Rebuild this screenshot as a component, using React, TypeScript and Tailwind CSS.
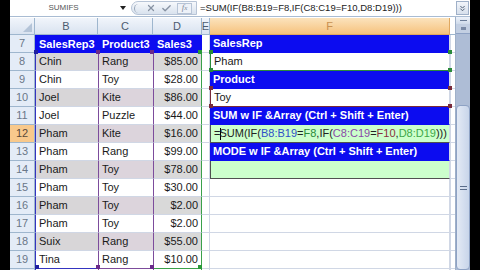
import { X, Check, ChevronsDown } from 'lucide-react'

type Row = { n: number; b: string; c: string; d: string }

const data: Row[] = [
  { n: 8, b: 'Chin', c: 'Rang', d: '$85.00' },
  { n: 9, b: 'Chin', c: 'Toy', d: '$28.00' },
  { n: 10, b: 'Joel', c: 'Kite', d: '$86.00' },
  { n: 11, b: 'Joel', c: 'Puzzle', d: '$44.00' },
  { n: 12, b: 'Pham', c: 'Kite', d: '$16.00' },
  { n: 13, b: 'Pham', c: 'Rang', d: '$99.00' },
  { n: 14, b: 'Pham', c: 'Toy', d: '$78.00' },
  { n: 15, b: 'Pham', c: 'Toy', d: '$30.00' },
  { n: 16, b: 'Pham', c: 'Toy', d: '$2.00' },
  { n: 17, b: 'Pham', c: 'Toy', d: '$2.00' },
  { n: 18, b: 'Suix', c: 'Rang', d: '$55.00' },
  { n: 19, b: 'Tina', c: 'Rang', d: '$10.00' },
]

// range handles: [left, top, colour] in grid coordinates
const handles: [number, number, string][] = [
  [24, 33, 'bg-[#2020a0]'],
  [25, 248, 'bg-[#2020a0]'],
  [86, 33, 'bg-[#6a2a8a]'],
  [140, 33, 'bg-[#6a2a8a]'],
  [86, 248, 'bg-[#6a2a8a]'],
  [140, 248, 'bg-[#6a2a8a]'],
  [188, 33, 'bg-[#2a9a3a]'],
  [188, 248, 'bg-[#2a9a3a]'],
  [199, 33, 'bg-[#2a8a3a]'],
  [438, 33, 'bg-[#2a8a3a]'],
  [199, 51, 'bg-[#2a8a3a]'],
  [438, 51, 'bg-[#2a8a3a]'],
  [199, 69, 'bg-[#7a2a3a]'],
  [438, 69, 'bg-[#7a2a3a]'],
  [199, 87, 'bg-[#7a2a3a]'],
  [438, 87, 'bg-[#7a2a3a]'],
]

function FormulaBar() {
  return (
    <div className="flex h-[17px] items-center border-b border-[#a9bcd3] bg-white">
      <div className="flex h-full w-[107px] items-center justify-center text-[8px] text-[#555]">SUMIFS</div>
      <div className="flex w-[12px] justify-center">
        <svg width="6" height="4" viewBox="0 0 6 4"><path d="M0 0h6L3 4z" fill="#222" /></svg>
      </div>
      <div className="ml-[2px] flex h-[14px] w-[66px] items-center rounded-l-full border border-[#b7c4d6] bg-linear-to-b from-[#f7f9fc] to-[#d9e2ee]">
        <div className="ml-[2px] h-[9px] w-[5px] rounded-l-full border-l border-[#9aa8bb]" />
        <X size={10} strokeWidth={3} className="ml-[7px] text-[#8893a3]" />
        <Check size={11} strokeWidth={3} className="ml-[5px] text-[#8893a3]" />
        <div className="ml-[5px] flex h-[11px] w-[15px] items-center justify-center border border-[#b7c4d6] bg-[#eef2f8] font-['Liberation_Serif',serif] text-[9px] italic text-[#7f8a9a]">
          f<span className="text-[7px]">x</span>
        </div>
      </div>
      <div className="ml-[3px] flex-1 font-['Liberation_Sans',Arial,sans-serif] text-[9.5px] text-[#222]">
        =SUM(IF(B8:B19=F8,IF(C8:C19=F10,D8:D19)))
      </div>
      <div className="mr-px flex h-[14px] w-[13px] items-center justify-center border border-[#9fb0c8] bg-linear-to-b from-[#f2f5fa] to-[#d7e0ec]">
        <ChevronsDown size={9} strokeWidth={2.5} className="text-[#4a5a70]" />
      </div>
    </div>
  )
}

function FCell({ n }: { n: number }) {
  const base = 'flex items-center pl-[3px] whitespace-nowrap overflow-hidden border-b border-r border-r-[#d0d7e5]'
  if (n === 7 || n === 9 || n === 11 || n === 13) {
    const label =
      n === 7 ? 'SalesRep' : n === 9 ? 'Product' : n === 11 ? 'SUM w IF &Array (Ctrl + Shift + Enter)' : 'MODE w IF &Array (Ctrl + Shift + Enter)'
    return <div className={`${base} border-b-[#0c0cf0] bg-[#0c0cf0] font-bold text-white`}>{label}</div>
  }
  if (n === 8) return <div className={`${base} border-l border-l-[#2a8a3a] border-b-[#2a8a3a] bg-white`}>Pham</div>
  if (n === 10) return <div className={`${base} border-l border-l-[#7a2a3a] border-b-[#7a2a3a] bg-white`}>Toy</div>
  if (n === 12)
    return (
      <div className={`${base} border-l border-l-[#505050] border-r-[#505050] border-b-[#505050] bg-[#ccffcc] pl-[2px] text-[#222]`}>
        =<span className="-mr-[2px] inline-block h-[12px] w-px bg-black" />SUM(IF(
        <span className="text-[#3050c8]">B8:B19</span>=<span className="text-[#2a8a3a]">F8</span>,IF(
        <span className="text-[#8a4aa8]">C8:C19</span>=<span className="text-[#8a3040]">F10</span>,
        <span className="text-[#40a848]">D8:D19</span>)))
      </div>
    )
  if (n === 14) return <div className={`${base} border-l border-l-[#505050] border-r-[#505050] border-b-[#505050] bg-[#ccffcc]`} />
  return <div className={`${base} border-b-[#d0d7e5] bg-white`} />
}

export default function App() {
  const rows = [7, ...data.map((r) => r.n), 20]
  return (
    <div className="flex h-[270px] w-[480px] overflow-hidden bg-black font-['Liberation_Sans',Arial,sans-serif] text-[11px] text-[#1a1a1a]">
      <div className="w-[10px]" />
      <div className="flex w-[460px] flex-col bg-white">
        <FormulaBar />
        <div className="flex flex-1 overflow-hidden">
          <div className="relative w-[445px]">
            <div className="grid grid-cols-[25px_63px_55px_49px_8px_240px_5px] grid-rows-[17px_repeat(14,18px)] pt-px">
              {/* column headers */}
              <div className="relative border-b border-r border-[#9eb6ce] bg-linear-to-b from-[#f1f5fb] to-[#d9e3f0]">
                <svg className="absolute bottom-[2px] right-[2px]" width="9" height="9" viewBox="0 0 9 9">
                  <path d="M9 0v9H0z" fill="#b4c4d8" />
                </svg>
              </div>
              {['B', 'C', 'D', 'E'].map((c) => (
                <div key={c} className="flex items-center justify-center border-b border-r border-[#9eb6ce] bg-linear-to-b from-[#f1f5fb] to-[#d9e3f0] text-[#4c5b70]">
                  {c}
                </div>
              ))}
              <div className="flex items-center justify-center border-b border-r border-[#e0a860] bg-linear-to-b from-[#fbe3bd] to-[#f6c27c] text-[#c89050]">F</div>
              <div className="border-b border-[#9eb6ce] bg-white" />

              {rows.map((n) => {
                const r = data.find((x) => x.n === n)
                const gray = n % 2 === 0 && n < 20
                const last = n === 19
                return [
                  <div
                    key={`h${n}`}
                    className={`flex items-center justify-center border-b border-r border-[#9eb6ce] ${
                      n === 12 ? 'bg-[#f8c98c] text-[#5a4a3a]' : 'bg-[#e4ecf7] text-[#6a7788]'
                    }`}
                  >
                    {n < 20 ? n : null}
                  </div>,
                  n === 7 ? (
                    <div key={`b${n}`} className="flex items-center bg-[#0c0cf0] pl-[4px] font-bold text-white">SalesRep3</div>
                  ) : (
                    <div
                      key={`b${n}`}
                      className={`flex items-center border-l border-l-[#3434c0] pl-[3px] ${last ? 'border-b border-b-[#3434c0]' : 'border-b border-b-[#d0d7e5]'} ${
                        gray ? 'bg-[#d8d6d8]' : 'bg-white'
                      }`}
                    >
                      {r?.b}
                    </div>
                  ),
                  n === 7 ? (
                    <div key={`c${n}`} className="flex items-center bg-[#0c0cf0] pl-[4px] font-bold text-white">Product3</div>
                  ) : (
                    <div
                      key={`c${n}`}
                      className={`flex items-center border-l border-l-[#7c4c9c] pl-[3px] ${last ? 'border-b border-b-[#7c4c9c]' : 'border-b border-b-[#d0d7e5]'} ${
                        gray ? 'bg-[#dcd4dc]' : 'bg-white'
                      }`}
                    >
                      {r?.c}
                    </div>
                  ),
                  n === 7 ? (
                    <div key={`d${n}`} className="flex items-center bg-[#0c0cf0] pl-[4px] font-bold text-white">Sales3</div>
                  ) : (
                    <div
                      key={`d${n}`}
                      className={`flex items-center justify-end border-l border-r border-l-[#7c4c9c] border-r-[#3aa04a] pr-[3px] ${
                        last ? 'border-b border-b-[#3aa04a]' : 'border-b border-b-[#d0d7e5]'
                      } ${gray ? 'bg-[#d9d9d9]' : 'bg-white'}`}
                    >
                      {r?.d}
                    </div>
                  ),
                  <div key={`e${n}`} className="border-b border-r border-[#d0d7e5] bg-white" />,
                  <FCell key={`f${n}`} n={n} />,
                  <div key={`g${n}`} className="border-b border-l border-[#d0d7e5] bg-white" />,
                ]
              })}
            </div>
            {handles.map(([x, y, c], i) => (
              <div key={i} className={`absolute h-[4px] w-[4px] ${c}`} style={{ left: x, top: y }} />
            ))}
          </div>

          {/* vertical scrollbar */}
          <div className="flex w-[15px] flex-col border-l border-[#9fb0c8] bg-[#aebdd6]">
            <div className="flex h-[7px] items-center justify-center bg-linear-to-b from-[#eef3fa] to-[#cfdaea]">
              <div className="h-px w-[7px] bg-[#6a7c98]" />
            </div>
            <div className="flex h-[10px] items-center justify-center border-b border-[#8ea2c4] bg-[#c3cfe2]">
              <div className="h-[3px] w-[5px] bg-[#7a8aa6]" />
            </div>
            <div className="h-[71px]" />
            <div className="flex flex-1 items-center justify-center rounded-sm border border-[#8ea2c4] bg-linear-to-r from-[#e3eaf5] to-[#c8d5ea]">
              <div className="flex flex-col gap-[2px]">
                <div className="h-px w-[7px] bg-[#5a6c8a]" />
                <div className="h-px w-[7px] bg-[#5a6c8a]" />
              </div>
            </div>
          </div>
        </div>
      </div>
      <div className="w-[10px]" />
    </div>
  )
}
